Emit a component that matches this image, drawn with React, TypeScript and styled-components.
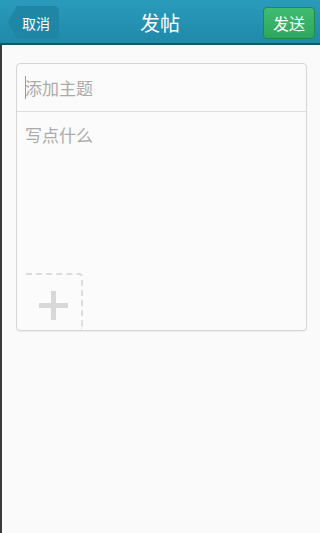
import React from 'react';
import styled, { createGlobalStyle } from 'styled-components';

const GlobalStyle = createGlobalStyle`
  html, body {
    margin: 0;
    padding: 0;
    background: #fafafa;
  }
  body {
    font-family: "Noto Sans CJK SC", "Noto Sans", sans-serif;
  }
`;

const Page = styled.div`
  min-height: 533px;
  background: #fafafa;
  border-left: 2px solid #3a3a3a;
  box-sizing: border-box;
`;

const TopBar = styled.header`
  height: 43px;
  margin-left: -2px;
  display: flex;
  align-items: center;
  justify-content: space-between;
  padding: 0 5px 0 8px;
  background: linear-gradient(#2a9bbb, #2089aa);
  border-bottom: 2px solid #17556a;
  position: relative;
`;

const Title = styled.h1`
  position: absolute;
  left: 0;
  right: 0;
  top: 0;
  margin: 0;
  text-align: center;
  line-height: 45px;
  font-size: 20px;
  font-weight: 400;
  color: #fff;
  pointer-events: none;
`;

const BackButton = styled.button`
  height: 33px;
  width: 51px;
  margin-top: 2px;
  padding: 0 0 0 14px;
  border: none;
  background: #1f86a6;
  color: #fff;
  font-family: inherit;
  font-size: 14px;
  text-align: left;
  clip-path: polygon(9px 0, calc(100% - 3px) 0, 100% 3px, 100% calc(100% - 3px), calc(100% - 3px) 100%, 9px 100%, 0 calc(50% + 1px), 0 calc(50% - 1px));
  border-radius: 0 4px 4px 0;
`;

const SendButton = styled.button`
  height: 32px;
  width: 52px;
  margin-top: 2px;
  border: 1px solid #1f8a4a;
  border-radius: 4px;
  background: linear-gradient(#40bb72, #2ea75d);
  color: #fff;
  font-family: inherit;
  font-size: 16px;
  padding: 0;
`;

const Content = styled.main`
  padding: 18px 13px 0 14px;
`;

const Card = styled.section`
  height: 268px;
  box-sizing: border-box;
  display: flex;
  flex-direction: column;
  background: #fbfbfb;
  border: 1px solid #d6d6d6;
  border-radius: 4px;
  box-shadow: 0 1px 1px rgba(0, 0, 0, 0.06);
  overflow: hidden;
`;

const SubjectRow = styled.div`
  height: 47px;
  display: flex;
  align-items: center;
  padding-left: 8px;
  border-bottom: 1px solid #dedede;
`;

const Caret = styled.span`
  width: 1px;
  height: 23px;
  background: #999;
  margin-right: -1px;
`;

const Placeholder = styled.span`
  font-size: 17px;
  line-height: 24px;
  color: #ababab;
`;

const Body = styled.div`
  flex: 1;
  display: flex;
  flex-direction: column;
  justify-content: space-between;
  padding: 11px 0 0 8px;
`;

const AddImage = styled.div`
  width: 57px;
  height: 57px;
  margin-left: 1px;
  display: flex;
  align-items: center;
  justify-content: center;
  border-top: 2px dashed #dcdcdc;
  border-right: 2px dashed #dcdcdc;
  border-top-right-radius: 4px;
  box-sizing: border-box;
  padding-top: 6px;
`;

const App: React.FC = () => {
  return (
    <Page>
      <GlobalStyle />
      <TopBar>
        <BackButton>取消</BackButton>
        <Title>发帖</Title>
        <SendButton>发送</SendButton>
      </TopBar>
      <Content>
        <Card>
          <SubjectRow>
            <Caret />
            <Placeholder>添加主题</Placeholder>
          </SubjectRow>
          <Body>
            <Placeholder>写点什么</Placeholder>
            <AddImage>
              <svg width="29" height="29" viewBox="0 0 29 29">
                <rect x="12" y="0" width="5" height="29" fill="#d8d8d8" />
                <rect x="0" y="12" width="29" height="5" fill="#d8d8d8" />
              </svg>
            </AddImage>
          </Body>
        </Card>
      </Content>
    </Page>
  );
};

export default App;
